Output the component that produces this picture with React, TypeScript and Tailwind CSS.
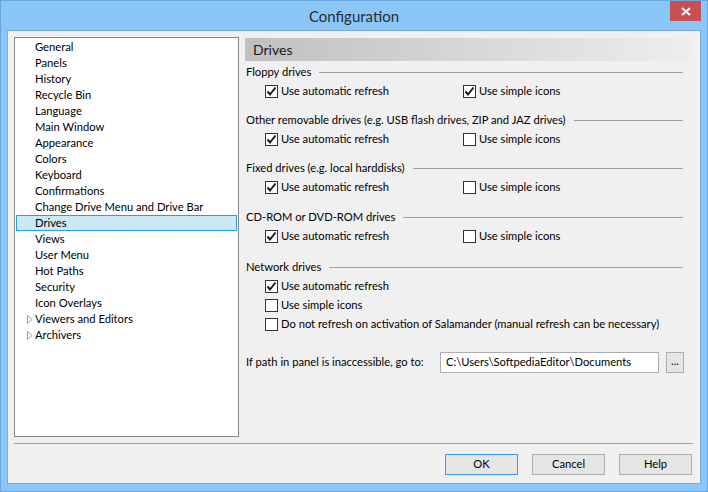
import React from 'react'

const treeItems = [
  'General',
  'Panels',
  'History',
  'Recycle Bin',
  'Language',
  'Main Window',
  'Appearance',
  'Colors',
  'Keyboard',
  'Confirmations',
  'Change Drive Menu and Drive Bar',
  'Drives',
  'Views',
  'User Menu',
  'Hot Paths',
  'Security',
  'Icon Overlays',
]

const Check = ({ checked, label }: { checked?: boolean; label: string }) => (
  <div className="flex items-center h-[19px]">
    <div className="w-[13px] h-[13px] border border-[#333] bg-white flex items-center justify-center shrink-0">
      {checked && (
        <svg width="11" height="11" viewBox="0 0 11 11">
          <path d="M1.5 5.5 L4 8.5 L9.5 1.5" fill="none" stroke="#1a1a1a" strokeWidth="2" />
        </svg>
      )}
    </div>
    <span className="ml-[3px] whitespace-nowrap">{label}</span>
  </div>
)

const Group = ({ title, top }: { title: string; top: string }) => (
  <div className={`flex items-center h-[19px] pr-[10px] ${top}`}>
    <span className="whitespace-nowrap">{title}</span>
    <div className="flex-1 h-px bg-[#a0a0a0] ml-[8px]" />
  </div>
)

const Pair = ({ left, right }: { left: boolean; right: boolean }) => (
  <div className="flex pl-[19px]">
    <div className="w-[198px] shrink-0">
      <Check checked={left} label="Use automatic refresh" />
    </div>
    <Check checked={right} label="Use simple icons" />
  </div>
)

const Arrow = () => (
  <svg width="6" height="9" viewBox="0 0 6 9" className="absolute left-[10px] top-[3px]">
    <path d="M0.5 0.5 L5 4.5 L0.5 8.5 Z" fill="none" stroke="#a0a0a0" />
  </svg>
)

const Button = ({ label, active }: { label: string; active?: boolean }) => (
  <div
    className={`w-[73px] h-[21px] flex items-center justify-center bg-[#e5e5e5] border ${
      active ? 'border-[#3399ff]' : 'border-[#adadad]'
    }`}
  >
    {label}
  </div>
)

export default function App() {
  return (
    <div
      className="w-[708px] h-[492px] bg-[#8bc6f8] border border-[#6aa6dc] flex flex-col text-[11.2px] text-black"
      style={{ fontFamily: 'Lato, sans-serif' }}
    >
      <div className="h-[29px] relative flex items-center justify-center shrink-0">
        <span className="text-[15px] text-[#2b2b2b] mt-[1px]">Configuration</span>
        <div className="absolute top-0 right-[6px] w-[31px] h-[20px] bg-[#c75050] flex items-center justify-center">
          <svg width="10" height="9" viewBox="0 0 10 9">
            <path d="M1 1 L9 8 M9 1 L1 8" stroke="white" strokeWidth="2" />
          </svg>
        </div>
      </div>
      <div className="flex-1 mx-[6px] mb-[7px] bg-[#f0f0f0] border border-[#7eacda] flex flex-col pl-[6px] pr-[7px] pt-[6px]">
        <div className="flex h-[400px] gap-[6px]">
          <div className="w-[225px] shrink-0 bg-white border border-[#828790] pt-px px-px">
            {treeItems.map((t) => (
              <div
                key={t}
                className={`h-[16px] flex items-center pl-[18px] border whitespace-nowrap ${
                  t === 'Drives' ? 'bg-[#cbe8f6] border-[#26a0da]' : 'border-transparent'
                }`}
              >
                {t}
              </div>
            ))}
            {['Viewers and Editors', 'Archivers'].map((t) => (
              <div key={t} className="h-[16px] flex items-center pl-[18px] border border-transparent relative">
                <Arrow />
                {t}
              </div>
            ))}
          </div>
          <div className="flex-1 min-w-0 flex flex-col">
            <div className="mt-px h-[23px] bg-linear-to-r from-[#c0c0c0] to-[#eeeeee] flex items-center pl-[8px] text-[14px] text-[#1a1a1a]">
              Drives
            </div>
            <div className="pl-px">
              <Group title="Floppy drives" top="mt-[2px]" />
              <Pair left right />
              <Group title="Other removable drives (e.g. USB flash drives, ZIP and JAZ drives)" top="mt-[10px]" />
              <Pair left right={false} />
              <Group title="Fixed drives (e.g. local harddisks)" top="mt-[10px]" />
              <Pair left right={false} />
              <Group title="CD-ROM or DVD-ROM drives" top="mt-[11px]" />
              <Pair left right={false} />
              <Group title="Network drives" top="mt-[12px]" />
              <div className="pl-[19px]">
                <Check checked label="Use automatic refresh" />
                <Check label="Use simple icons" />
                <Check label="Do not refresh on activation of Salamander (manual refresh can be necessary)" />
              </div>
              <div className="flex items-center mt-[18px] h-[21px]">
                <span className="w-[194px] shrink-0 whitespace-nowrap">If path in panel is inaccessible, go to:</span>
                <div className="w-[219px] shrink-0 h-[21px] bg-white border border-[#abadb3] flex items-center pl-[5px] whitespace-nowrap">
                  C:\Users\SoftpediaEditor\Documents
                </div>
                <div className="ml-[7px] w-[18px] shrink-0 h-[21px] bg-[#e5e5e5] border border-[#adadad] flex items-center justify-center leading-none pb-[4px]">
                  ...
                </div>
              </div>
            </div>
          </div>
        </div>
        <div className="mt-[6px] h-px bg-[#a0a0a0]" />
        <div className="mt-[10px] flex justify-end gap-[14px] pr-px">
          <Button label="OK" active />
          <Button label="Cancel" />
          <Button label="Help" />
        </div>
      </div>
    </div>
  )
}
